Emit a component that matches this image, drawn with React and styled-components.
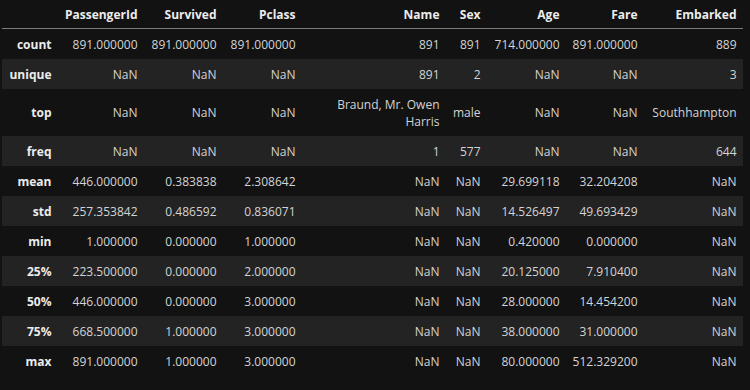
import styled, { createGlobalStyle } from "styled-components";

const GlobalStyle = createGlobalStyle`
  body {
    margin: 0;
    background: #121212;
    font-family: "Open Sans", "Noto Sans", sans-serif;
  }
`;

const Wrap = styled.div`
  padding: 0 0 0 2px;
`;

const Table = styled.table`
  border-collapse: collapse;
  border-spacing: 0;
  table-layout: fixed;
  width: 741px;
  font-size: 12px;
  line-height: 17px;
  color: #d4d4d4;
`;

const HeadRow = styled.tr`
  border-bottom: 1px solid #7a7a7a;
`;

const HeadCell = styled.th`
  height: 28px;
  padding: 0 6.5px;
  text-align: right;
  font-weight: 700;
  color: #ececec;
  white-space: nowrap;
`;

const Row = styled.tr`
  background: ${(p) => (p.$striped ? "#232323" : "transparent")};
`;

const IndexCell = styled.th`
  padding: 6.5px 6.5px;
  text-align: right;
  font-weight: 700;
  color: #ececec;
  white-space: nowrap;
`;

const Cell = styled.td`
  padding: 6.5px 6.5px;
  text-align: right;
  white-space: ${(p) => (p.$wrap ? "normal" : "nowrap")};
`;

// column widths taken from the reference
const widths = [56, 86, 79, 79, 144, 41, 79, 78, 99];
const columns = ["PassengerId", "Survived", "Pclass", "Name", "Sex", "Age", "Fare", "Embarked"];

const rows = [
  ["count", "891.000000", "891.000000", "891.000000", "891", "891", "714.000000", "891.000000", "889"],
  ["unique", "NaN", "NaN", "NaN", "891", "2", "NaN", "NaN", "3"],
  ["top", "NaN", "NaN", "NaN", "Braund, Mr. Owen Harris", "male", "NaN", "NaN", "Southhampton"],
  ["freq", "NaN", "NaN", "NaN", "1", "577", "NaN", "NaN", "644"],
  ["mean", "446.000000", "0.383838", "2.308642", "NaN", "NaN", "29.699118", "32.204208", "NaN"],
  ["std", "257.353842", "0.486592", "0.836071", "NaN", "NaN", "14.526497", "49.693429", "NaN"],
  ["min", "1.000000", "0.000000", "1.000000", "NaN", "NaN", "0.420000", "0.000000", "NaN"],
  ["25%", "223.500000", "0.000000", "2.000000", "NaN", "NaN", "20.125000", "7.910400", "NaN"],
  ["50%", "446.000000", "0.000000", "3.000000", "NaN", "NaN", "28.000000", "14.454200", "NaN"],
  ["75%", "668.500000", "1.000000", "3.000000", "NaN", "NaN", "38.000000", "31.000000", "NaN"],
  ["max", "891.000000", "1.000000", "3.000000", "NaN", "NaN", "80.000000", "512.329200", "NaN"],
];

export default function App() {
  return (
    <Wrap>
      <GlobalStyle />
      <Table>
        <colgroup>
          {widths.map((w, i) => (
            <col key={i} style={{ width: w }} />
          ))}
        </colgroup>
        <thead>
          <HeadRow>
            <HeadCell />
            {columns.map((c) => (
              <HeadCell key={c}>{c}</HeadCell>
            ))}
          </HeadRow>
        </thead>
        <tbody>
          {rows.map((r, i) => (
            <Row key={r[0]} $striped={i % 2 === 1}>
              <IndexCell>{r[0]}</IndexCell>
              {r.slice(1).map((v, j) => (
                <Cell key={j} $wrap={j === 3}>
                  {v}
                </Cell>
              ))}
            </Row>
          ))}
        </tbody>
      </Table>
    </Wrap>
  );
}
